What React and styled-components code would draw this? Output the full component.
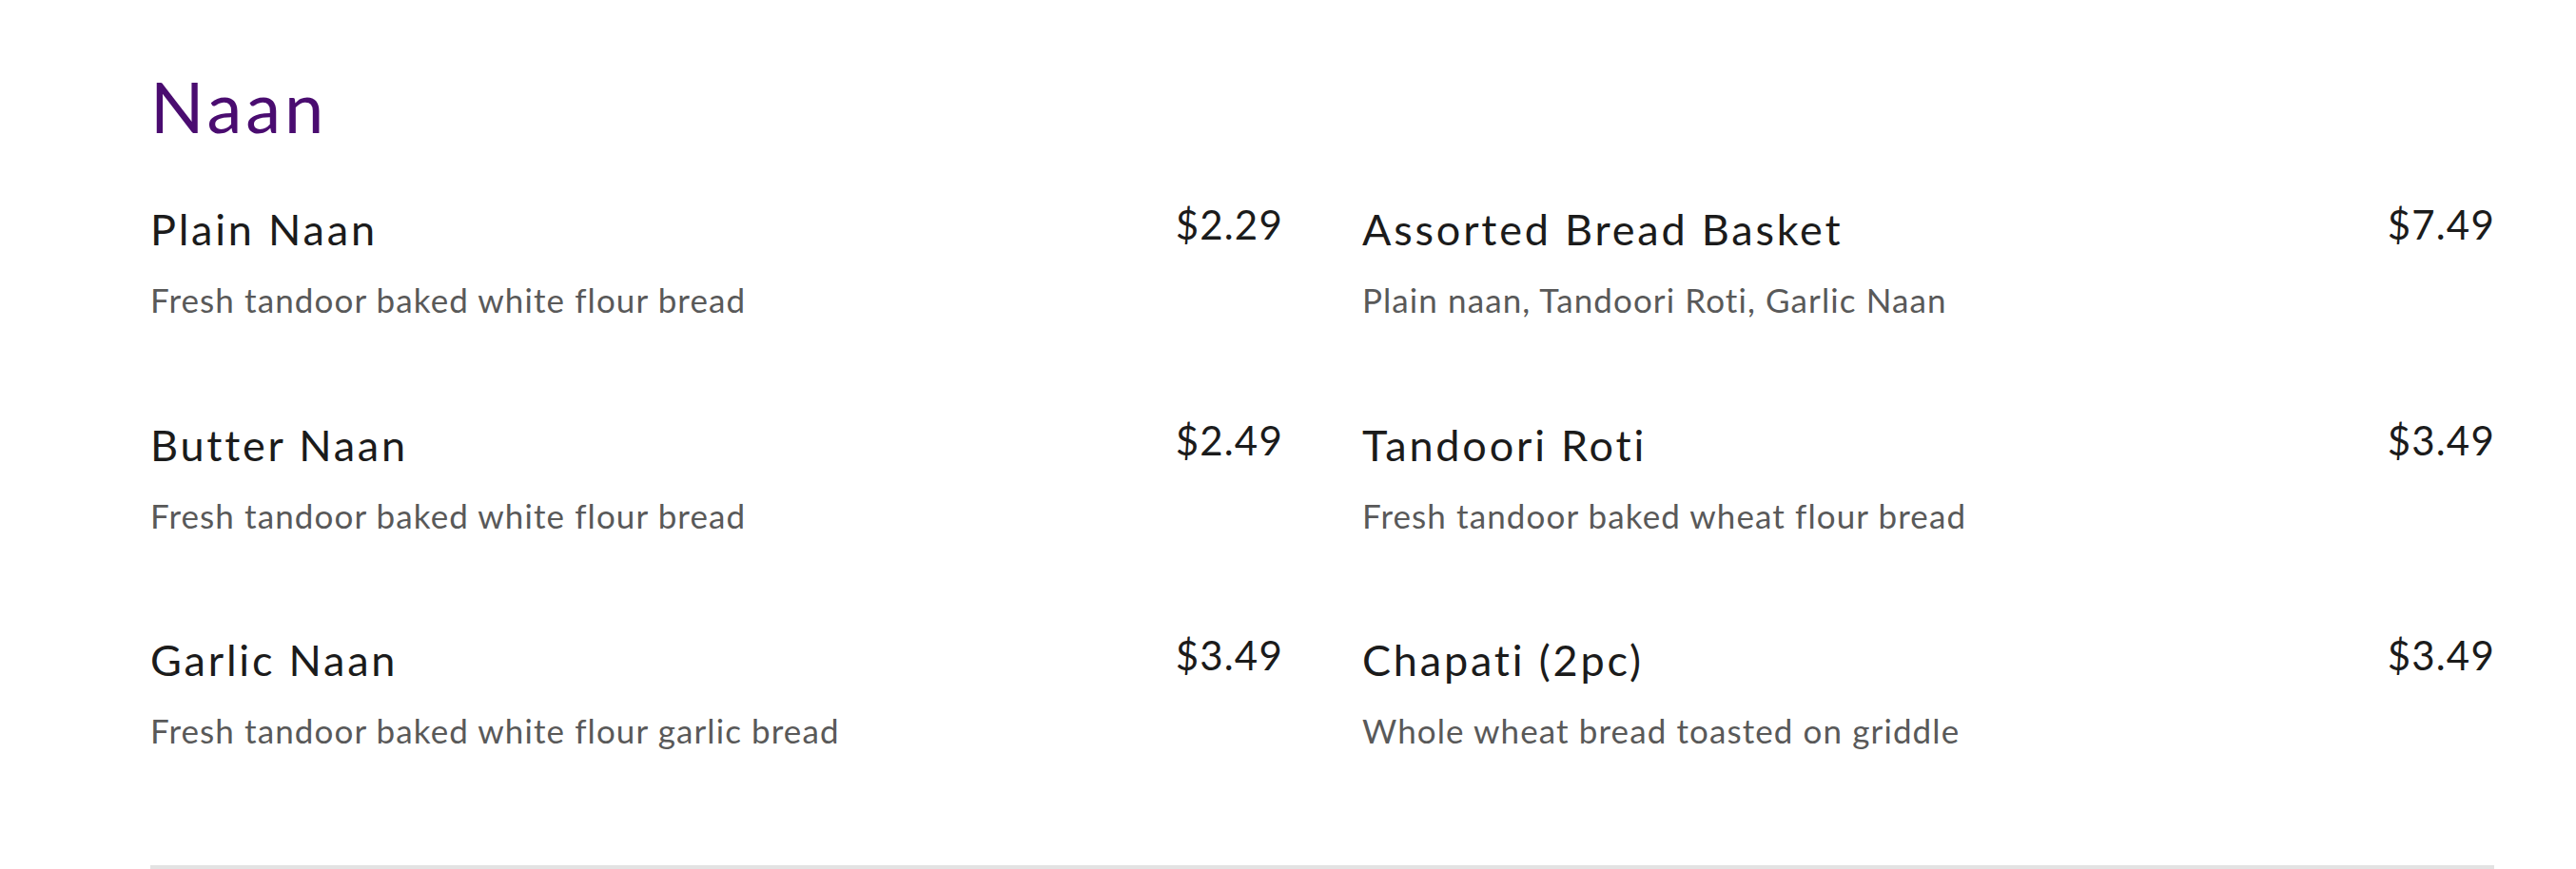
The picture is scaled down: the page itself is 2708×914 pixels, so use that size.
import React from 'react';
import styled, { createGlobalStyle } from 'styled-components';

const Global = createGlobalStyle`
  body {
    margin: 0;
    background: #fff;
    font-family: "Lato", "Liberation Sans", sans-serif;
  }
`;

const Section = styled.section`
  padding: 75px 0 0 158px;
  width: 2464px;
`;

const Title = styled.h2`
  margin: 0 0 66px;
  font-size: 74px;
  line-height: 74px;
  font-weight: 400;
  letter-spacing: 4px;
  color: #4a0c70;
`;

const MenuGrid = styled.div`
  display: grid;
  grid-template-columns: 1190px 1190px;
  column-gap: 84px;
  row-gap: 104.5px;
`;

const Item = styled.div`
  display: flex;
  flex-direction: column;
`;

const ItemHead = styled.div`
  display: flex;
  justify-content: space-between;
  align-items: flex-start;
`;

const Name = styled.h3`
  margin: 0;
  font-size: 45px;
  line-height: 52px;
  font-weight: 400;
  letter-spacing: 2.8px;
  color: #1b1b1b;
`;

const Price = styled.span`
  font-size: 42px;
  line-height: 42px;
  letter-spacing: 1.2px;
  margin-right: -1px;
  color: #1b1b1b;
`;

const Description = styled.p`
  margin: 26px 0 0;
  font-size: 35px;
  line-height: 44px;
  letter-spacing: 1.1px;
  color: #595959;
`;

const Divider = styled.hr`
  margin: 120px 0 0;
  border: 0;
  height: 4px;
  background: #e3e3e3;
`;

const items = [
  { name: 'Plain Naan', price: '$2.29', desc: 'Fresh tandoor baked white flour bread' },
  { name: 'Assorted Bread Basket', price: '$7.49', desc: 'Plain naan, Tandoori Roti, Garlic Naan' },
  { name: 'Butter Naan', price: '$2.49', desc: 'Fresh tandoor baked white flour bread' },
  { name: 'Tandoori Roti', price: '$3.49', desc: 'Fresh tandoor baked wheat flour bread' },
  { name: 'Garlic Naan', price: '$3.49', desc: 'Fresh tandoor baked white flour garlic bread' },
  { name: 'Chapati (2pc)', price: '$3.49', desc: 'Whole wheat bread toasted on griddle' },
];

export default function App() {
  return (
    <>
      <Global />
      <Section>
        <Title>Naan</Title>
        <MenuGrid>
          {items.map((item) => (
            <Item key={item.name}>
              <ItemHead>
                <Name>{item.name}</Name>
                <Price>{item.price}</Price>
              </ItemHead>
              <Description>{item.desc}</Description>
            </Item>
          ))}
        </MenuGrid>
        <Divider />
      </Section>
    </>
  );
}
